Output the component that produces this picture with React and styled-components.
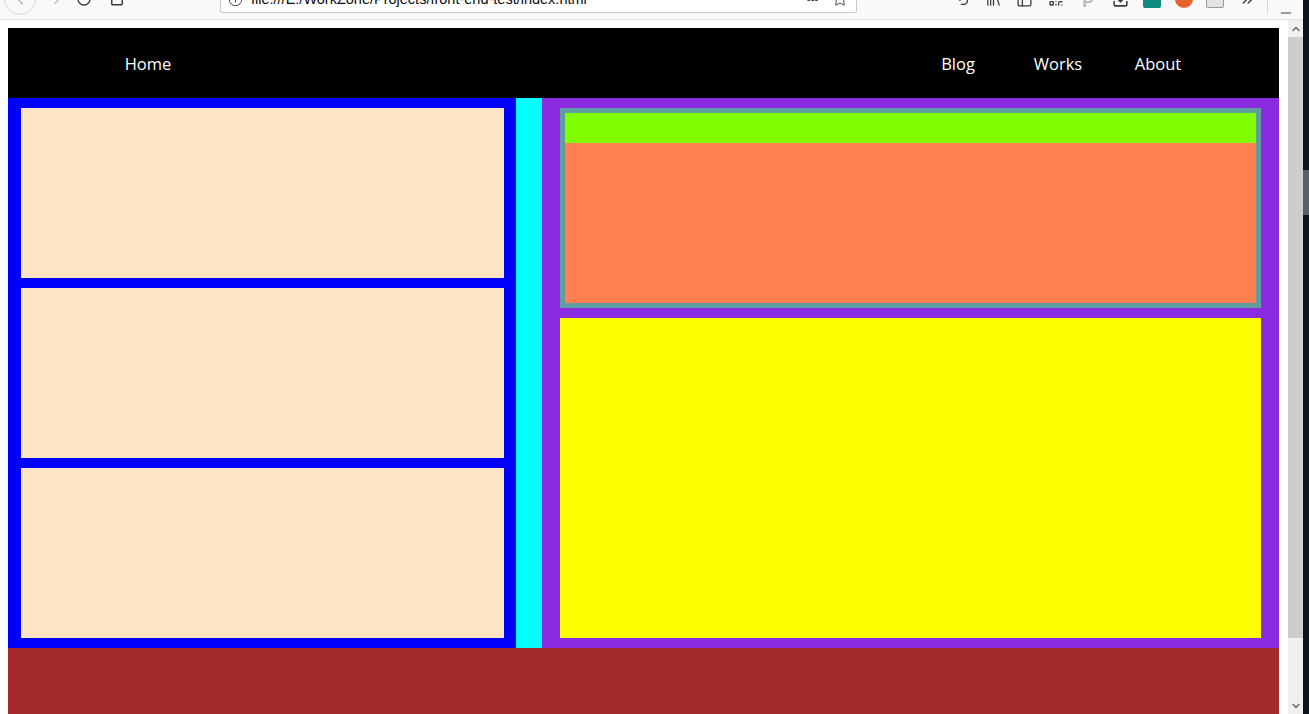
import React from "react";
import styled, { createGlobalStyle } from "styled-components";
import {
  ChevronLeft,
  ChevronRight,
  RotateCw,
  Lock,
  Info,
  Star,
  Undo2,
  Library,
  PanelLeft,
  QrCode,
  Download,
  ChevronsRight,
  Minus,
  ChevronUp,
  ChevronDown,
} from "lucide-react";

const GlobalStyle = createGlobalStyle`
  html, body {
    margin: 0;
    padding: 0;
    overflow: hidden;
    background: #0b131b;
  }
  * {
    box-sizing: border-box;
  }
`;

const Frame = styled.div`
  width: 1309px;
  height: 714px;
  display: flex;
  flex-direction: column;
  overflow: hidden;
`;

/* browser toolbar, only the lower part of it shows */
const Toolbar = styled.div`
  height: 20px;
  width: 1303px;
  overflow: hidden;
  background: #f9f9fa;
  border-bottom: 1px solid #e2e2e3;
  flex-shrink: 0;
`;

const ToolRow = styled.div`
  height: 40px;
  margin-top: -21px;
  display: flex;
  align-items: center;
  color: #3b3b3c;
`;

const BackButton = styled.div`
  width: 32px;
  height: 32px;
  margin-left: 4px;
  border-radius: 50%;
  border: 1px solid #d7d7db;
  display: flex;
  align-items: center;
  justify-content: center;
  color: #b1b1b3;
`;

const ToolButton = styled.div`
  width: 28px;
  height: 28px;
  margin-left: ${(p) => p.$ml || 0}px;
  margin-top: ${(p) => p.$mt || 0}px;
  display: flex;
  align-items: center;
  justify-content: center;
  color: ${(p) => p.$color || "#3b3b3c"};
  font-family: "Liberation Sans", Arial, sans-serif;
  font-size: 17px;
  font-weight: bold;
`;

const UrlBox = styled.div`
  width: 637px;
  height: 28px;
  margin-left: ${(p) => p.$ml}px;
  background: #fff;
  border: 1px solid #c8c8cc;
  border-radius: 2px;
  display: flex;
  align-items: center;
  padding-left: 7px;
  padding-right: 8px;
`;

const UrlText = styled.span`
  flex: 1;
  margin-left: 8px;
  font-family: "Liberation Sans", Arial, sans-serif;
  font-size: 14.5px;
  color: #0c0c0d;
  white-space: nowrap;
`;

const Dots = styled.span`
  font-family: "Liberation Sans", Arial, sans-serif;
  font-size: 14px;
  color: #3b3b3c;
  margin-right: 14px;
  letter-spacing: -1px;
`;

const Badge = styled.div`
  width: 18px;
  height: 18px;
  border-radius: ${(p) => (p.$round ? "50%" : "2px")};
  background: ${(p) => p.$bg};
  border: ${(p) => (p.$outline ? "1px solid #9a9a9a" : "none")};
`;

const Separator = styled.div`
  width: 1px;
  height: 30px;
  background: #d7d7db;
  margin-left: 6px;
`;

const Body = styled.div`
  flex: 1;
  display: flex;
  min-height: 0;
`;

const Viewport = styled.div`
  width: 1288px;
  background: #fff;
  padding: 8px 9px 0 8px;
  overflow: hidden;
`;

const Scrollbar = styled.div`
  width: 15px;
  background: #f0f0f0;
  display: flex;
  flex-direction: column;
  align-items: center;
  color: #606060;
`;

const ScrollArrow = styled.div`
  height: 17px;
  display: flex;
  align-items: center;
  justify-content: center;
`;

const ScrollThumb = styled.div`
  width: 15px;
  height: 601px;
  background: #cdcdcd;
`;

const ScrollTrack = styled.div`
  flex: 1;
`;

const DesktopEdge = styled.div`
  width: 6px;
  background: #0b131b;
  display: flex;
  flex-direction: column;
`;

const EdgeBlock = styled.div`
  height: 45px;
  margin-top: 150px;
  background: #5a6068;
`;

/* page */
const Header = styled.header`
  height: 70px;
  background: #000;
  display: flex;
  align-items: center;
  padding: 0 71px 0 90px;
`;

const NavLink = styled.a`
  width: 100px;
  text-align: center;
  color: #fff;
  font-family: "Open Sans", "Noto Sans", sans-serif;
  font-size: 16.5px;
  text-decoration: none;
  margin-right: ${(p) => (p.$push ? "auto" : "0")};
`;

const Main = styled.main`
  height: 550px;
  display: flex;
`;

const LeftColumn = styled.section`
  width: 508px;
  background: #0000ff;
  padding: 10px 12px 10px 13px;
  display: flex;
  flex-direction: column;
  gap: 10px;
`;

const Card = styled.div`
  height: 170px;
  background: #ffe4c4;
`;

const Gutter = styled.div`
  width: 26px;
  background: #00ffff;
`;

const RightColumn = styled.section`
  flex: 1;
  background: #8a2be2;
  padding: 10px 18px;
  display: flex;
  flex-direction: column;
  gap: 10px;
`;

const Panel = styled.div`
  height: 200px;
  border: 5px solid #5f9ea0;
  display: flex;
  flex-direction: column;
`;

const PanelHead = styled.div`
  height: 30px;
  background: #7fff00;
`;

const PanelBody = styled.div`
  flex: 1;
  background: #ff7f50;
`;

const Content = styled.div`
  flex: 1;
  background: #ffff00;
`;

const Footer = styled.footer`
  height: 80px;
  background: #a52a2a;
`;

export default function App() {
  return (
    <>
      <GlobalStyle />
      <Frame>
        <Toolbar>
          <ToolRow>
            <BackButton>
              <ChevronLeft size={20} strokeWidth={1.5} />
            </BackButton>
            <ToolButton $ml={7} $color="#b1b1b3">
              <ChevronRight size={18} strokeWidth={1.5} />
            </ToolButton>
            <ToolButton $ml={-1}>
              <RotateCw size={16} strokeWidth={2} />
            </ToolButton>
            <ToolButton $ml={5}>
              <Lock size={14} strokeWidth={2.5} />
            </ToolButton>
            <UrlBox $ml={89}>
              <Info size={15} strokeWidth={1.5} color="#3b3b3c" />
              <UrlText>file:///E:/WorkZone/Projects/front-end-test/index.html</UrlText>
              <Dots>•••</Dots>
              <Star size={16} strokeWidth={1.5} color="#3b3b3c" />
            </UrlBox>
            <ToolButton $ml={91}>
              <Undo2 size={16} strokeWidth={2} />
            </ToolButton>
            <ToolButton $ml={3}>
              <Library size={17} strokeWidth={1.8} />
            </ToolButton>
            <ToolButton $ml={3}>
              <PanelLeft size={17} strokeWidth={1.8} />
            </ToolButton>
            <ToolButton $ml={4}>
              <QrCode size={16} strokeWidth={2} />
            </ToolButton>
            <ToolButton $ml={4} $mt={6} $color="#b9b9bb">
              P
            </ToolButton>
            <ToolButton $ml={4}>
              <Download size={17} strokeWidth={2.2} />
            </ToolButton>
            <ToolButton $ml={4}>
              <Badge $bg="#0f8a7e" />
            </ToolButton>
            <ToolButton $ml={4}>
              <Badge $bg="#e8622c" $round />
            </ToolButton>
            <ToolButton $ml={3}>
              <Badge $bg="#e4e4e4" $outline />
            </ToolButton>
            <ToolButton $ml={4}>
              <ChevronsRight size={17} strokeWidth={2} />
            </ToolButton>
            <Separator />
            <ToolButton $ml={4} $mt={27}>
              <Minus size={16} strokeWidth={1.5} />
            </ToolButton>
          </ToolRow>
        </Toolbar>
        <Body>
          <Viewport>
            <Header>
              <NavLink $push>Home</NavLink>
              <NavLink>Blog</NavLink>
              <NavLink>Works</NavLink>
              <NavLink>About</NavLink>
            </Header>
            <Main>
              <LeftColumn>
                <Card />
                <Card />
                <Card />
              </LeftColumn>
              <Gutter />
              <RightColumn>
                <Panel>
                  <PanelHead />
                  <PanelBody />
                </Panel>
                <Content />
              </RightColumn>
            </Main>
            <Footer />
          </Viewport>
          <Scrollbar>
            <ScrollArrow>
              <ChevronUp size={12} strokeWidth={2.5} />
            </ScrollArrow>
            <ScrollThumb />
            <ScrollTrack />
            <ScrollArrow>
              <ChevronDown size={12} strokeWidth={2.5} />
            </ScrollArrow>
          </Scrollbar>
          <DesktopEdge>
            <EdgeBlock />
          </DesktopEdge>
        </Body>
      </Frame>
    </>
  );
}
